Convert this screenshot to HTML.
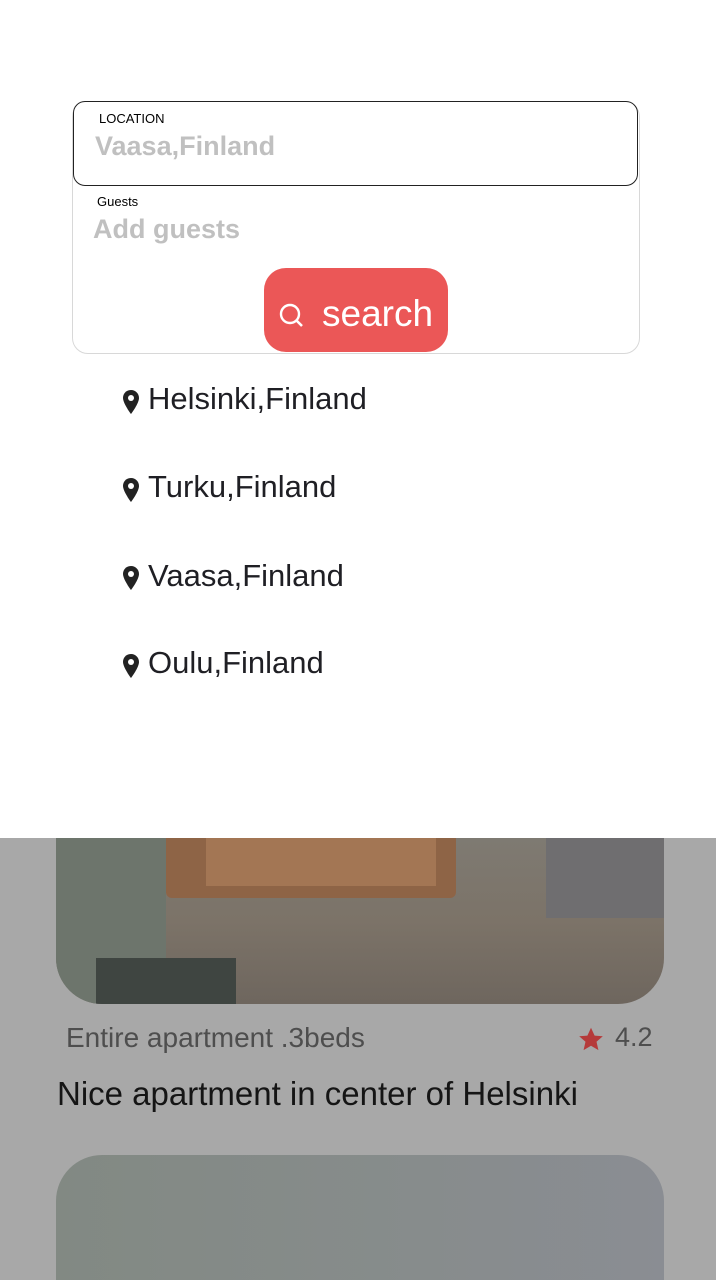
<!DOCTYPE html>
<html style="overflow:hidden;height:1280px"><head><meta charset="utf-8"><style>
body{margin:0;width:720px;height:1280px;position:relative;overflow:hidden;background:#fff;font-family:"Liberation Sans","DejaVu Sans",sans-serif}
.a{position:absolute}
.loc{font-size:31px;color:#1f1f24;left:148px}
.pin{left:122px;width:18px;height:26px}
</style></head><body>
<div class="a" style="left:72px;top:101px;width:566px;height:251px;border:1px solid #d8d8d8;border-radius:16px"></div>
<div class="a" style="left:73px;top:101px;width:563px;height:83px;border:1.5px solid #222;border-radius:12px;background:#fff"></div>
<div class="a" style="left:99px;top:111px;font-size:13px;color:#000">LOCATION</div>
<div class="a" style="left:95px;top:131px;font-size:27px;font-weight:bold;color:#c0c0c0">Vaasa,Finland</div>
<div class="a" style="left:97px;top:194px;font-size:13px;color:#000">Guests</div>
<div class="a" style="left:93px;top:214px;font-size:27px;font-weight:bold;color:#c0c0c0">Add guests</div>
<div class="a" style="left:264px;top:268px;width:184px;height:84px;background:#eb5757;border-radius:22px"></div>
<svg class="a" style="left:278px;top:302px" width="28" height="28" viewBox="0 0 28 28"><circle cx="12" cy="12" r="9" fill="none" stroke="#fff" stroke-width="2.4"/><line x1="18.5" y1="18.5" x2="24" y2="24" stroke="#fff" stroke-width="2.6"/></svg>
<div class="a" style="left:322px;top:293px;font-size:37px;color:#fff">search</div>

<svg class="a pin" style="top:389px" viewBox="0 0 18 26"><path d="M9 1C4.5 1 1 4.5 1 9c0 5.5 8 16 8 16s8-10.5 8-16c0-4.5-3.5-8-8-8z" fill="#222"/><circle cx="9" cy="9" r="3" fill="#fff"/></svg>
<div class="a loc" style="top:381px">Helsinki,Finland</div>
<svg class="a pin" style="top:477px" viewBox="0 0 18 26"><path d="M9 1C4.5 1 1 4.5 1 9c0 5.5 8 16 8 16s8-10.5 8-16c0-4.5-3.5-8-8-8z" fill="#222"/><circle cx="9" cy="9" r="3" fill="#fff"/></svg>
<div class="a loc" style="top:469px">Turku,Finland</div>
<svg class="a pin" style="top:565px" viewBox="0 0 18 26"><path d="M9 1C4.5 1 1 4.5 1 9c0 5.5 8 16 8 16s8-10.5 8-16c0-4.5-3.5-8-8-8z" fill="#222"/><circle cx="9" cy="9" r="3" fill="#fff"/></svg>
<div class="a loc" style="top:558px">Vaasa,Finland</div>
<svg class="a pin" style="top:653px" viewBox="0 0 18 26"><path d="M9 1C4.5 1 1 4.5 1 9c0 5.5 8 16 8 16s8-10.5 8-16c0-4.5-3.5-8-8-8z" fill="#222"/><circle cx="9" cy="9" r="3" fill="#fff"/></svg>
<div class="a loc" style="top:645px">Oulu,Finland</div>

<div class="a" style="left:0;top:838px;width:716px;height:442px;background:#a8a8a8"></div>
<div class="a" style="left:56px;top:838px;width:608px;height:166px;border-radius:0 0 46px 46px;overflow:hidden;background:linear-gradient(180deg,#7e7a72 0%,#7c7368 50%,#6e665e 100%)">
 <div class="a" style="left:0;top:0;width:110px;height:166px;background:#6d756c"></div>
 <div class="a" style="left:110px;top:0;width:290px;height:60px;background:#8e6446;border-radius:0 0 6px 6px"></div>
 <div class="a" style="left:150px;top:0;width:230px;height:48px;background:#a37654"></div>
 <div class="a" style="left:490px;top:0;width:118px;height:80px;background:#6f6e70"></div>
 <div class="a" style="left:40px;top:120px;width:140px;height:46px;background:#3f4541"></div>
</div>
<div class="a" style="left:66px;top:1022px;font-size:28px;color:#4e4e4e">Entire apartment .3beds</div>
<svg class="a" style="left:577px;top:1026px" width="28" height="27" viewBox="0 0 24 24"><path d="M12 1.5l3.2 7 7.3.6-5.6 4.9 1.7 7.4L12 17.5l-6.6 3.9 1.7-7.4L1.5 9.1l7.3-.6z" fill="#b53a3a"/></svg>
<div class="a" style="left:615px;top:1022px;font-size:27px;color:#4e4e4e">4.2</div>
<div class="a" style="left:57px;top:1075px;font-size:33px;color:#151515">Nice apartment in center of Helsinki</div>
<div class="a" style="left:56px;top:1155px;width:608px;height:125px;border-radius:46px 46px 0 0;background:linear-gradient(90deg,#828983,#878c8c 60%,#8a8d93)"></div>
</body></html>
